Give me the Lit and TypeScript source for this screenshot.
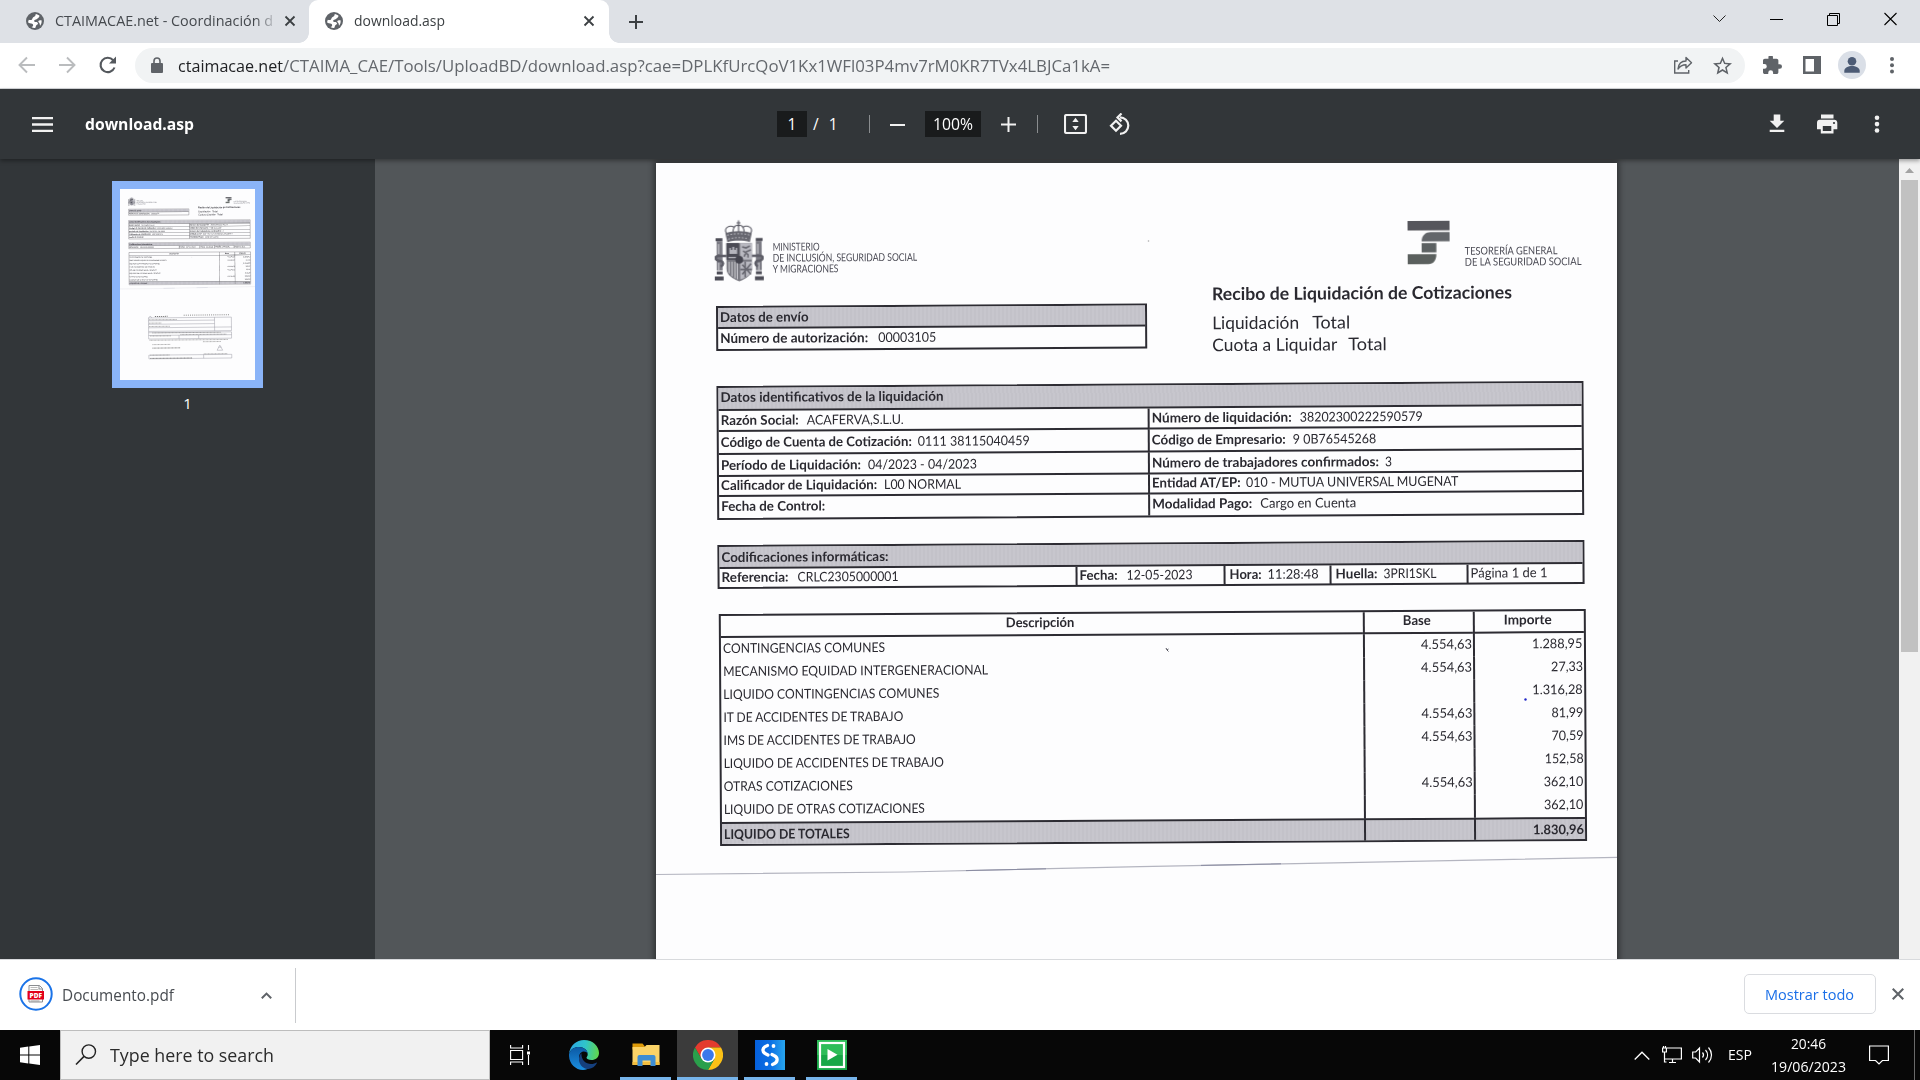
import { LitElement, html, css, svg, nothing } from "lit";

const measure = document.createElement("canvas").getContext("2d")!;

/** One line of text condensed or stretched to a given advance width. */
class FitText extends LitElement {
  static properties = { text: {}, w: { type: Number } };
  declare text: string;
  declare w: number;
  static styles = css`
    :host { display: inline-block; white-space: pre; flex: none; text-align: left; }
    .run { display: block; width: max-content; transform-origin: 0 50%; }
  `;
  render() {
    return html`<span class="run">${this.text}</span>`;
  }
  updated() {
    measure.font = getComputedStyle(this).font;
    const k = this.w / measure.measureText(this.text).width;
    this.style.width = this.w + "px";
    (this.renderRoot.querySelector(".run") as HTMLElement).style.transform = `scaleX(${k})`;
  }
}
customElements.define("fit-text", FitText);

const fit = (text: string, w: number, cls = "") => html`<fit-text class=${cls} .text=${text} .w=${w}></fit-text>`;
const pair = (l: string, lw: number, gap: number, v = "", vw = 0) =>
  html`${fit(l, lw, "b")}${v ? html`<span style="width:${gap}px" class="sp"></span>${fit(v, vw)}` : nothing}`;

const coat = html`<svg class="coat" viewBox="0 0 50 62">
  <g fill="none" stroke="#55555f" stroke-width="1.1">
    <path d="M24.5 0v6M22.5 2.5h4" />
    <path d="M12 13c-3-6 4-9 8-6 1-3 8-3 9 0 4-3 11 0 8 6M20 7c-2 3-1 8 0 10M29 7c2 3 1 8 0 10M24.500 5v12" />
  </g>
  <path fill="#66666f" d="M11 13c7-3 20-3 27 0l-2 9c-7-2-16-2-23 0z" />
  <path stroke="#c9c9cf" stroke-width="1" stroke-dasharray="1.500 2" fill="none" d="M13 15c7-2 16-2 23 0M14 19c7-2 14-2 21 0" />
  <path fill="#77777f" d="M12 23h26v26c0 7-6 10-13 13-7-3-13-6-13-13z" />
  <path fill="#4b4b55" d="M12 23h13v17H12z" />
  <path fill="#b9b9c1" d="M26 23h12v17H26zM26 42h12v7c0 5-5 9-12 11z" />
  <path fill="#b5b5bd" d="M15 34v-6h1.500v2h1.500v-3h2v3h1.500v-2H23v6zM14 37h9v1.500h-9z" />
  <path stroke="#66666f" stroke-width="1.600" fill="none" d="M28 27l4 1 4-2M30 37l2-5 5-2M29 31l5 4v3M28 45l9 10M37 44l-9 11M26 50h12M31 42v16" />
  <path stroke="#d5d5da" stroke-width="1" fill="none" d="M14.500 42v12M17.500 42v15M20.500 42v17M23 42v18" />
  <circle cx="25" cy="40" r="4" fill="#44444e" />
  <g fill="#7b7b84">
    <path d="M2 21h6v30H2zM42 21h6v30h-6z" />
  </g>
  <path stroke="#dcdce0" stroke-width="1" d="M4 24v10M44 24v10M4 43v8M45 43v8" />
  <g fill="#4d4d57">
    <path d="M1 18h7v3H1zM42 18h7v3h-7zM2 52h6v3H2zM42 52h6v3h-6zM0 57h9v4H0zM41 57h9v4h-9z" />
  </g>
  <path fill="none" stroke="#5d5d67" stroke-width="2.500" d="M12 36H4c-4 0-4 4 0 5 5 0 6 4 2 6M38 36h8c4 0 4 4 0 5-5 0-6 4-2 6" />
</svg>`;

const tgss = html`<svg class="tgss" viewBox="0 0 42 44">
  <path fill="#56565c" d="M0 0h42v9.500H0z" />
  <path fill="#63666a" d="M14 20.500c0-6 4-9.300 9-9.300h19v9.300z" />
  <path fill="#5c6162" d="M14 22.200h14.700v9.300H14z" />
  <path fill="#5b605e" d="M0 33.300h28.700c0 6-3 10-8 10H0z" />
</svg>`;

const dashes = [
  [250, 905, 90, 4, 7], [455, 898, 330, 3, 8], [208, 928, 200, 2, 3], [208, 952, 90, 2, 3], [208, 976, 150, 2, 3], [230, 1022, 490, 2, 3],
  [215, 1044, 150, 2, 3], [430, 1036, 330, 2, 3], [210, 1074, 560, 2, 3], [590, 1088, 130, 2, 3], [230, 1105, 130, 2, 3],
  [230, 1130, 200, 3, 3], [214, 1180, 140, 2, 3], [214, 1203, 300, 3, 3], [595, 1175, 170, 2, 3],
];
const stub = html`<svg class="stub" viewBox="0 0 961 1360">
  <g fill="none" stroke="#8b8b95" stroke-width="3" transform="rotate(-.6 480 1050)">
    <path d="M204 915h590v96H204zM204 935h470M204 960h470M204 985h590M674 915v96M204 1011v54h590v-45H204M204 1040h590M420 1040v25M560 1040v25M204 1180h590v26H204zM594 1180v26" />
    ${dashes.map((d) => svg`<path stroke="#666" stroke-width=${d[3] * 1.8} stroke-dasharray="7 ${d[4]}" d="M${d[0]} ${d[1]}h${d[2]}" />`)}
    <path d="M205 915l12-14 10 14M690 1150l20-36 20 36zM700 1128h22" />
  </g>
</svg>`;

type Row = [string, number, string, number, string, number];
const rows: Row[] = [
  ["CONTINGENCIAS COMUNES", 162, "4.554,63", 51, "1.288,95", 50.5],
  ["MECANISMO EQUIDAD INTERGENERACIONAL", 265, "4.554,63", 51, "27,33", 32],
  ["LIQUIDO CONTINGENCIAS COMUNES", 216, "", 0, "1.316,28", 50.5],
  ["IT DE ACCIDENTES DE TRABAJO", 181, "4.554,63", 51, "81,99", 32],
  ["IMS DE ACCIDENTES DE TRABAJO", 193, "4.554,63", 51, "70,59", 32],
  ["LIQUIDO DE ACCIDENTES DE TRABAJO", 221, "", 0, "152,58", 39],
  ["OTRAS COTIZACIONES", 129, "4.554,63", 51, "362,10", 39.5],
  ["LIQUIDO DE OTRAS COTIZACIONES", 201, "", 0, "362,10", 39.5],
];

class ReceiptPage extends LitElement {
  static styles = css`
    :host { display: block; position: relative; width: 961px; height: 1360px; background: #fdfdfe; overflow: hidden; color: #2a2930; font: 13.4px/16px Lato, "Liberation Sans", sans-serif; }
    .scan { padding: 56px 34px 0 60px; transform: rotate(-0.33deg); transform-origin: 61px 144px; }
    .b { font-weight: 700; }
    .sp { flex: none; }
    .top { display: flex; height: 167px; }
    .left { width: 431px; display: flex; flex-direction: column; }
    .ministry { display: flex; height: 86px; align-items: flex-start; padding-top: 0.5px; }
    .coat { width: 49px; height: 62px; margin-left: -1.5px; filter: blur(0.4px); flex: none; }
    .inst { display: flex; flex-direction: column; font-size: 10.8px; line-height: 11px; color: #4a4a54; margin: 21.5px 0 0 9.5px; }
    .right { margin-left: 64.5px; flex: 1; display: flex; flex-direction: column; padding-top: 6px; }
    .office { display: flex; margin-left: 196px; height: 60.5px; }
    .tgss { width: 42px; height: 44px; filter: blur(0.3px); flex: none; }
    .office .inst { margin: 23.5px 0 0 15.5px; }
    .title { font-size: 17.6px; line-height: 22px; }
    .line { display: flex; font-size: 17.6px; line-height: 22px; }
    .line.first { margin-top: 7.5px; }
    .box { border: 2px solid #2d2c33; box-sizing: border-box; }
    .shade { background: repeating-linear-gradient(90deg, #c3c2c9 0 2px, #c7c6cd 2px 4px); }
    .cell { display: flex; align-items: center; padding: 0 0 2px 2px; box-sizing: border-box; }
    .envio { height: 45.5px; display: grid; grid-template-rows: 21.5px 1fr; }
    .envio .shade, .ident .shade, .codif .shade { border-bottom: 2px solid #2d2c33; }
    .envio .shade { padding-bottom: 0; }
    .ident { width: 867px; height: 133.5px; display: grid; grid-template-columns: 430.5px 1fr; grid-template-rows: 23.4px 21px 23px 21.6px 20px 1fr; }
    .ident .shade, .codif .shade { grid-column: 1 / -1; }
    .ident .shade { padding-bottom: 3.5px; }
    .ident .cell:not(.shade) { border-bottom: 2px solid #2d2c33; padding-bottom: 1px; }
    .ident .cell:not(.shade):nth-last-child(-n + 2) { border-bottom: 0; padding-bottom: 3px; }
    .ident .cell:nth-child(2n) { border-right: 2px solid #2d2c33; }
    .ident .cell:nth-child(2n + 3) { padding-left: 2.5px; }
    .codif { width: 867px; height: 44.5px; margin-top: 25px; display: grid; grid-template-columns: 358px 148px 106px 137px 1fr; grid-template-rows: 22.5px 1fr; }
    .codif .cell:not(.shade) { padding-bottom: 2.5px; }
    .codif .shade { padding-bottom: 0.5px; }
    .codif .cell + .cell + .cell { border-left: 2px solid #2d2c33; margin-left: -2px; }
    .codif .wide { padding-left: 4px; }
    .lines { width: 867px; height: 232.5px; margin: 24.5px 0 0 0.5px; display: grid; grid-template-columns: 642px 110.5px 1fr; grid-template-rows: 22px repeat(8, 23.1px) 1fr; }
    .lines .cell { padding-bottom: 3px; }
    .lines .cell:nth-child(3n + 2), .lines .cell:nth-child(3n) { border-left: 2px solid #2d2c33; justify-content: flex-end; padding-right: 1px; }
    .lines .head { border-bottom: 2px solid #2d2c33; justify-content: center !important; padding-right: 5px !important; padding-bottom: 2.5px; }
    .lines .shade { border-top: 2px solid #2d2c33; padding-bottom: 0.5px; }
    .stub { position: absolute; inset: 0; width: 961px; height: 1360px; }
    .marks { position: absolute; inset: 0; width: 961px; height: 800px; }
  `;
  render() {
    return html`
      <div class="scan">
        <div class="top">
          <div class="left">
            <div class="ministry">
              ${coat}
              <div class="inst">
                ${fit("MINISTERIO", 47)}${fit("DE INCLUSIÓN, SEGURIDAD SOCIAL", 144.5)}${fit("Y MIGRACIONES", 66)}
              </div>
            </div>
            <div class="box envio">
              <div class="cell shade">${fit("Datos de envío", 88.500, "b")}</div>
              <div class="cell">${pair("Número de autorización:", 148, 10, "00003105", 58)}</div>
            </div>
          </div>
          <div class="right">
            <div class="office">
              ${tgss}
              <div class="inst">${fit("TESORERÍA GENERAL", 93)}${fit("DE LA SEGURIDAD SOCIAL", 117)}</div>
            </div>
            <div class="title">${fit("Recibo de Liquidación de Cotizaciones", 300, "b")}</div>
            <div class="line first">${fit("Liquidación", 87)}<span class="sp" style="width:13px"></span>${fit("Total", 38)}</div>
            <div class="line">${fit("Cuota a Liquidar", 125)}<span class="sp" style="width:11px"></span>${fit("Total", 38.500)}</div>
          </div>
        </div>
        <div class="box ident">
          <div class="cell shade">${fit("Datos identificativos de la liquidación", 223, "b")}</div>
          <div class="cell">${pair("Razón Social:", 78, 8, "ACAFERVA,S.L.U.", 97)}</div>
          <div class="cell">${pair("Número de liquidación:", 140, 7.5, "38202300222590579", 123)}</div>
          <div class="cell">${pair("Código de Cuenta de Cotización:", 191, 6, "0111 38115040459", 112)}</div>
          <div class="cell">${pair("Código de Empresario:", 134, 7, "9 0B76545268", 83.5)}</div>
          <div class="cell">${pair("Período de Liquidación:", 140, 7, "04/2023 - 04/2023", 109)}</div>
          <div class="cell">${pair("Número de trabajadores confirmados:", 227, 6, "3", 7)}</div>
          <div class="cell">${pair("Calificador de Liquidación:", 156.5, 6.5, "L00 NORMAL", 77)}</div>
          <div class="cell">${pair("Entidad AT/EP:", 89, 5, "010 - MUTUA UNIVERSAL MUGENAT", 213)}</div>
          <div class="cell">${pair("Fecha de Control:", 104, 0)}</div>
          <div class="cell">${pair("Modalidad Pago:", 100, 8, "Cargo en Cuenta", 96)}</div>
        </div>
        <div class="box codif">
          <div class="cell shade">${fit("Codificaciones informáticas:", 167, "b")}</div>
          <div class="cell">${pair("Referencia:", 67, 9, "CRLC2305000001", 101)}</div>
          <div class="cell">${pair("Fecha:", 38, 9, "12-05-2023", 66)}</div>
          <div class="cell wide">${pair("Hora:", 32, 6, "11:28:48", 51)}</div>
          <div class="cell wide">${pair("Huella:", 42, 6, "3PRI1SKL", 53)}</div>
          <div class="cell">${fit("Página 1 de 1", 77)}</div>
        </div>
        <div class="box lines">
          <div class="cell head">${fit("Descripción", 68.5, "b")}</div>
          <div class="cell head">${fit("Base", 28, "b")}</div>
          <div class="cell head">${fit("Importe", 48, "b")}</div>
          ${rows.map(
            (r) => html`<div class="cell">${fit(r[0], r[1])}</div>
              <div class="cell">${r[2] ? fit(r[2], r[3]) : nothing}</div>
              <div class="cell">${fit(r[4], r[5])}</div>`
          )}
          <div class="cell shade">${fit("LIQUIDO DE TOTALES", 126, "b")}</div>
          <div class="cell shade"></div>
          <div class="cell shade">${fit("1.830,96", 51, "b")}</div>
        </div>
      </div>
      <svg class="marks" viewBox="0 0 961 800" fill="none">
        <path stroke="#b4b5c0" stroke-width="1.200" d="M0 711.500L250 709L484 703.600L961 694.300" />
        <path stroke="#8a8ca2" stroke-width="1" d="M310 707.600l80-1.800M545 702.400l80-1.600" />
        <path stroke="#55555f" d="M510 485l1 2 1.500-1M511 487l1.500 1.500" />
        <circle cx="869.500" cy="536.500" r="1.200" fill="#2228c8" />
        <circle cx="492.500" cy="78" r=".8" fill="#aaa" />
      </svg>
      ${stub}
    `;
  }
}
customElements.define("receipt-page", ReceiptPage);

const globe = html`<svg class="i18" viewBox="0 0 24 24"><circle cx="12" cy="12" r="12" fill="#5f6368" />
  <path fill="#fff" d="M13 2.800c1.800.2 4 1.200 5.300 2.600-1 .9-1.200 2.400-2.300 2.800-1.200.3-1.500 1.500-2.700 1.800-1.500.2-2.400.8-2.500 2 .1 1.200 1.200 1.200 2.400 1.200 1.600 0 2.800.9 2.800 2.200 0 1.300-1.200 1.700-2.200 2.200-.6.800-.5 2-1.500 3.600-1.800.2-3.500-.2-5-1.200 1.300-.2 2.200-1 2.200-2.400 0-1.500-1-2.200-2.500-2.300-1.300 0-2.700-.7-4.200-1.300.1-1.500.4-2.600 1-3.800 1.500.7 3.200.7 4.200-.3.800-.9.600-2.200 1.700-2.900 1.300-.8 3.300-1.300 3.300-4.200zM20.700 11c.5 2.800-.2 5.500-2 7.300-.3-1-.2-2.400-.9-3.500-.7-1.200-1.800-1.800-1.300-2.800.7-1.200 2.700-1.300 4.200-1z" /></svg>`;
const cross = (c: string) => html`<svg class=${c} viewBox="0 0 12 12"><path d="M1.500 1.500l9 9M10.500 1.500l-9 9" fill="none" stroke="currentColor" stroke-width="1.800" /></svg>`;

class AppRoot extends LitElement {
  static styles = css`
    :host { display: flex; flex-direction: column; width: 1920px; height: 1080px; overflow: hidden; background: #fff; font: 14.4px/20px "Open Sans", "Noto Sans", sans-serif; color: #3c4043; }
    * { box-sizing: border-box; }
    svg { display: block; flex: none; }
    .i18 { width: 18px; height: 18px; }
    .tabs { height: 43px; background: #dee1e6; display: flex; align-items: center; flex: none; }
    .tab { height: 43px; display: flex; align-items: center; padding-bottom: 2px; }
    .tab.idle { width: 309px; padding-left: 26px; color: #45494e; }
    .tab .label { margin-left: 11px; width: 219px; display: flex; }
    .idle .label { -webkit-mask-image: linear-gradient(90deg, #000 200px, transparent 224px); }
    .tab.active { width: 300px; background: #fff; border-radius: 9px 9px 0 0; padding-left: 16px; position: relative; }
    .tab.active::before, .tab.active::after { content: ""; position: absolute; bottom: 0; width: 10px; height: 10px; }
    .tab.active::before { left: -10px; background: radial-gradient(circle at 0 0, transparent 9.5px, #fff 10px); }
    .tab.active::after { right: -10px; background: radial-gradient(circle at 100% 0, transparent 9.500px, #fff 10px); }
    .active .label { width: 220px; }
    .tx { width: 12px; height: 12px; color: #3c4043; margin-left: 10px; }
    .active .tx { margin-left: 9px; margin-right: 0; }
    .plus { width: 16px; height: 16px; margin-left: 19px; }
    .win { margin-left: auto; display: flex; align-items: center; height: 37px; align-self: flex-start; padding-right: 1px; }
    .win svg { width: 57px; height: 20px; }
    .bar { height: 46px; display: flex; align-items: center; border-bottom: 1px solid #d5d7da; padding-bottom: 1px; flex: none; }
    .nav { width: 20px; height: 20px; }
    .nav.n1 { margin-left: 17px; } .nav.n2 { margin-left: 20px; } .nav.n3 { margin-left: 21px; }
    .omni { margin-left: 17px; width: 1610px; height: 35px; border-radius: 18px; background: #f1f3f4; display: flex; align-items: center; padding-left: 16px; font-size: 16.5px; line-height: 24px; color: #64686d; }
    .omni fit-text { margin-top: 2px; }
    .omni .lock { width: 12px; height: 16px; margin-right: 15px; }
    .host { color: #202124; }
    .omni .share { width: 20px; height: 20px; margin-left: auto; margin-right: 20px; }
    .omni .star { width: 19px; height: 19px; margin-right: 13px; }
    .ext { width: 19px; height: 19px; margin-left: 18px; }
    .side { width: 18px; height: 18px; margin-left: 21px; }
    .ava { width: 28px; height: 28px; margin-left: 17px; }
    .kebab { width: 6px; height: 18px; margin-left: 23px; }
    .pdfbar { height: 70px; background: #323639; color: #fff; display: grid; grid-template-columns: 777px 1fr auto; align-items: center; box-shadow: 0 2px 4px rgba(0, 0, 0, 0.35); position: relative; flex: none; }
    .pl, .pc, .pr { display: flex; align-items: center; }
    .burger { width: 21px; height: 15px; margin-left: 32px; }
    .name { margin-left: 32px; font-weight: 700; font-size: 15.5px; }
    .field { background: #191b1c; height: 26px; display: flex; align-items: center; justify-content: center; font-size: 15.500px; }
    .f1 { width: 30px; } .f2 { width: 56px; margin-left: 20px; }
    .of { font-size: 15.5px; width: 54px; padding-left: 6px; display: flex; gap: 10px; }
    .sep { width: 1px; height: 18px; background: #8a8d8f; margin-left: 8px; }
    .pm { width: 15px; height: 15px; }
    .pm.minus { margin-left: 20px; } .pm.add { margin-left: 20px; } .sep.two { margin-left: 21px; }
    .fitp { width: 23px; height: 20px; margin-left: 26px; }
    .rot { width: 23px; height: 23px; margin-left: 22px; }
    .pr svg { width: 22px; height: 22px; margin-right: 28px; }
    .pr svg:last-child { margin-right: 32px; }
    .view { height: 800px; flex: none; display: flex; background: #525659; overflow: hidden; }
    .thumbs { width: 375px; background: #323639; display: flex; flex-direction: column; align-items: center; padding-top: 22px; color: #fff; font: 15px/18px "Open Sans", "Noto Sans", sans-serif; }
    .thumb { width: 151px; height: 207px; border: 8px solid #8ab4f8; overflow: hidden; background: #fdfdfe; }
    .mini { width: 961px; transform: scale(0.1405); transform-origin: 0 0; }
    .num { margin-top: 6px; }
    .stage { flex: 1; padding: 4px 0 0 281px; overflow: hidden; }
    .sheet { width: 961px; box-shadow: 0 0 6px 2px rgba(0, 0, 0, 0.45); }
    .scroll { width: 21px; background: #f1f1f1; display: flex; flex-direction: column; align-items: center; }
    .scroll svg { width: 9px; height: 5px; margin-top: 9px; }
    .grip { width: 17px; height: 472px; background: #c1c1c1; margin-top: 7px; }
    .dl { height: 71px; border-top: 1px solid #d8dadd; display: flex; align-items: center; flex: none; background: #fff; padding-bottom: 2px; }
    .pdf { width: 34px; height: 34px; margin-left: 18.500px; }
    .file { font-size: 15.5px; margin: 2px 0 0 9px; color: #484c51; }
    .up { width: 11px; height: 7px; margin: 2px 0 0 87.5px; }
    .vr { width: 1px; height: 55px; background: #c9cbce; margin: 3px 0 0 22.500px; }
    .all { margin-left: auto; width: 132px; height: 40px; border: 1px solid #dadce0; border-radius: 5px; display: flex; align-items: center; justify-content: center; padding-right: 2px; color: #1a6fe8; font-size: 14.600px; }
    .cx { width: 14px; height: 14px; color: #5f6368; margin: 0 15px 0 15px; }
    .task { height: 50px; background: #070707; display: flex; align-items: center; flex: none; color: #fff; }
    .start { width: 60px; padding-left: 20px; }
    .start svg { width: 20px; height: 20px; }
    .search { width: 430px; height: 50px; border: 1px solid #bdbdbd; background: #f1f1f1; color: #2b2b2b; display: flex; align-items: center; padding-left: 14px; font-size: 18px; line-height: 24px; }
    .search svg { width: 22px; height: 22px; margin-right: 13px; }
    .app { width: 51px; height: 50px; display: flex; align-items: center; justify-content: center; margin-left: 11px; }
    .app svg { width: 30px; height: 30px; }
    .app.run { border-bottom: 3px solid #76b4ea; padding-top: 3px; }
    .app.tv { margin-left: 4px; } .app.tv svg { width: 20px; height: 20px; }
    .app.edge { margin-left: 13px; } 
    .app.cur { width: 61px; background: #3b3b3b; margin-left: 6px; }
    .app.s { margin-left: 6px; }
    .tray { margin-left: auto; display: flex; align-items: center; font-size: 14px; }
    .chev { width: 16px; height: 9px; margin-right: 12px; }
    .net { width: 20px; height: 18px; margin-right: 10px; }
    .vol { width: 21px; height: 18px; margin-right: 15px; }
    .clock { display: flex; flex-direction: column; align-items: center; line-height: 23px; margin-left: 19px; width: 75px; }
    .note { width: 20px; height: 20px; margin-left: 23px; }
    .desk { width: 1px; height: 50px; background: #6a6a6a; margin: 0 5px 0 25px; }
  `;

  render() {
    return html`
      <div class="tabs">
        <div class="tab idle">${globe}<div class="label">${fit("CTAIMACAE.net - Coordinación d", 218)}</div>${cross("tx")}</div>
        <div class="tab active">${globe}<div class="label">${fit("download.asp", 91)}</div>${cross("tx")}</div>
        <svg class="plus" viewBox="0 0 16 16"><path d="M8 1v14M1 8h14" stroke="#3c4043" stroke-width="2" /></svg>
        <div class="win">
          <svg viewBox="0 0 57 20"><path d="M22.500 6.500l6 6 6-6" fill="none" stroke="#222" /></svg>
          <svg viewBox="0 0 57 20"><path d="M22 10.500h13" stroke="#000" /></svg>
          <svg viewBox="0 0 57 20"><path d="M22.500 6.500h10v10h-10zM24.500 6.500v-2h10v10h-2" fill="none" stroke="#000" /></svg>
          <svg viewBox="0 0 57 20"><path d="M22.500 4l12 12M34.500 4l-12 12" fill="none" stroke="#000" stroke-width="1.100" /></svg>
        </div>
      </div>
      <div class="bar">
        <svg class="nav n1" viewBox="0 0 20 20"><path d="M18 10H3M10 2.500L2.500 10l7.500 7.500" fill="none" stroke="#babcbe" stroke-width="1.900" /></svg>
        <svg class="nav n2" viewBox="0 0 20 20"><path d="M2 10h15M10 2.500l7.500 7.500-7.500 7.500" fill="none" stroke="#babcbe" stroke-width="1.900" /></svg>
        <svg class="nav n3" viewBox="0 0 20 20"><path d="M16.500 12.500a7.200 7.200 0 1 1-1.300-7.300" fill="none" stroke="#54585d" stroke-width="2.100" /><path d="M18 1.500V8.500H11z" fill="#54585d" /></svg>
        <div class="omni">
          <svg class="lock" viewBox="0 0 12 16"><path d="M1 6h10a1 1 0 0 1 1 1v8a1 1 0 0 1-1 1H1a1 1 0 0 1-1-1V7a1 1 0 0 1 1-1z" fill="#5f6368" /><path d="M3 7V4a3 3 0 0 1 6 0v3" fill="none" stroke="#5f6368" stroke-width="1.600" /></svg>
          ${fit("ctaimacae.net", 105, "host")}${fit("/CTAIMA_CAE/Tools/UploadBD/download.asp?cae=DPLKfUrcQoV1Kx1WFl03P4mv7rM0KR7TVx4LBJCa1kA=", 827)}
          <svg class="share" viewBox="0 0 20 20" fill="none" stroke="#5f6368" stroke-width="1.400"><path d="M5 6H1.700v12h14v-3" /><path d="M5 14c.5-5 3-8 8-8V2.500l5.500 5.300L13 13V9.800c-4 0-6 1.200-8 4.200z" stroke-linejoin="round" /></svg>
          <svg class="star" viewBox="0 0 24 24"><path fill="#5f6368" d="M24 9.200l-8.600-.7L12 .5 8.600 8.500 0 9.200l6.500 5.700L4.600 23.300 12 18.800l7.400 4.500-2-8.400zM12 16.500l-4.500 2.700 1.200-5.100-4-3.500 5.300-.4L12 5.300l2.100 4.900 5.200.4-4 3.500 1.200 5.100z" /></svg>
        </div>
        <svg class="ext" viewBox="2 2 21 21"><path fill="#5f6368" d="M20.500 11H19V7c0-1.100-.9-2-2-2h-4V3.500a2.500 2.500 0 0 0-5 0V5H4c-1.100 0-2 .9-2 2v3.800h1.500a2.700 2.700 0 0 1 0 5.400H2V20c0 1.100.9 2 2 2h3.800v-1.500a2.700 2.700 0 0 1 5.400 0V22H17c1.100 0 2-.9 2-2v-4h1.500a2.500 2.500 0 0 0 0-5z" /></svg>
        <svg class="side" viewBox="0 0 18 18"><path fill="#5f6368" fill-rule="evenodd" d="M0 0h18v18H0zM2.500 3v12.500H11V3z" /></svg>
        <svg class="ava" viewBox="0 0 28 28"><circle cx="14" cy="14" r="14" fill="#dadfe7" /><circle cx="14" cy="10.300" r="4.300" fill="#4c5b75" /><path fill="#4c5b75" d="M6.300 21.700v-2c0-3 4-4.700 7.700-4.700s7.700 1.700 7.700 4.700v2z" /></svg>
        <svg class="kebab" viewBox="0 0 6 18" fill="#5f6368"><circle cx="3" cy="3" r="2" /><circle cx="3" cy="9.200" r="2" /><circle cx="3" cy="15.500" r="2" /></svg>
      </div>
      <div class="pdfbar">
        <div class="pl">
          <svg class="burger" viewBox="0 0 21 15"><path d="M0 1.200h21M0 7.500h21M0 13.800h21" stroke="#f1f1f1" stroke-width="2.300" /></svg>
          ${fit("download.asp", 109, "name")}
        </div>
        <div class="pc">
          <div class="field f1">1</div>
          <div class="of"><span>/</span><span>1</span></div>
          <div class="sep"></div>
          <svg class="pm minus" viewBox="0 0 15 15"><path d="M0 8h15" stroke="#f1f1f1" stroke-width="2" /></svg>
          <div class="field f2">${fit("100%", 40)}</div>
          <svg class="pm add" viewBox="0 0 15 15"><path d="M0 7.500h15M7.500 0v15" stroke="#f1f1f1" stroke-width="2" /></svg>
          <div class="sep two"></div>
          <svg class="fitp" viewBox="0 0 23 20"><rect x="1" y="1" width="21" height="18" rx="1.500" fill="none" stroke="#f1f1f1" stroke-width="2.100" /><path fill="#f1f1f1" d="M11.500 3.700l3.200 4.200H8.300zM11.500 16.300l3.200-4.200H8.300z" /></svg>
          <svg class="rot" viewBox="0 0 23 23"><path d="M11 4.300a8.300 8.300 0 1 1 0 16.600" fill="none" stroke="#f1f1f1" stroke-width="2.200" /><path d="M12.500.5L8.500 4.400l4 4" fill="none" stroke="#f1f1f1" stroke-width="2.200" /><path d="M7 7.700l5 5-5 5-5-5z" fill="none" stroke="#f1f1f1" stroke-width="2.200" /></svg>
        </div>
        <div class="pr">
          <svg viewBox="0 0 22 22" fill="#f1f1f1"><path d="M7.700 1.500h6.600v6.300h4L11 15 3.700 7.800h4zM3.700 16.800h14.600v2.300H3.700z" /></svg>
          <svg viewBox="0 0 22 22"><path fill="#f1f1f1" d="M5 1.500h12.500v4H5zM3.700 6.800h14.600c1.700 0 3 1.300 3 3v6.400h-3.800v4.300H4.800v-4.300H1V9.800c0-1.700 1-3 2.700-3z" /><path fill="#323639" d="M6.800 13h8.500v5H6.800z" /><circle cx="18" cy="10" r="1.100" fill="#323639" /></svg>
          <svg viewBox="0 0 22 22" fill="#f1f1f1"><circle cx="11" cy="4.800" r="2.300" /><circle cx="11" cy="11.100" r="2.300" /><circle cx="11" cy="17.500" r="2.300" /></svg>
        </div>
      </div>
      <div class="view">
        <div class="thumbs">
          <div class="thumb"><div class="mini"><receipt-page></receipt-page></div></div>
          <div class="num">1</div>
        </div>
        <div class="stage"><receipt-page class="sheet"></receipt-page></div>
        <div class="scroll"><svg viewBox="0 0 9 5"><path d="M0 5L4.500 0 9 5z" fill="#a3a3a3" /></svg><div class="grip"></div></div>
      </div>
      <div class="dl">
        <svg class="pdf" viewBox="0 0 34 34"><circle cx="17" cy="17" r="15.700" fill="#fff" stroke="#1a73e8" stroke-width="2" /><path d="M10 8.500h10.500l3 3V25H10z" fill="#fff" stroke="#8a8d91" /><path d="M11.500 10.500h7M11.500 12.500h8" stroke="#aaa" stroke-width=".8" /><path d="M20 8.500v3.500h3.500" fill="none" stroke="#8a8d91" /><path d="M8.500 14h16.500v8.500H8.500z" fill="#e2001a" /><path d="M11.500 24h9" stroke="#999" /><text x="16.800" y="20.600" text-anchor="middle" font-family="Open Sans, sans-serif" font-weight="800" font-size="6.500" fill="#fff">PDF</text></svg>
        ${fit("Documento.pdf", 112, "file")}
        <svg class="up" viewBox="0 0 11 7"><path d="M.8 6.300l4.700-4.700 4.700 4.700" fill="none" stroke="#5f6368" stroke-width="2" /></svg>
        <div class="vr"></div>
        <div class="all">${fit("Mostrar todo", 89)}</div>
        ${cross("cx")}
      </div>
      <div class="task">
        <div class="start"><svg viewBox="0 0 20 20" fill="#fff"><path d="M0 2.700L8.300 1.500v8H0zM9.300 1.400L20 0v9.500H9.300zM0 10.500h8.300v8L0 17.300zM9.300 10.500H20V20L9.300 18.600z" /></svg></div>
        <div class="search"><svg viewBox="0 0 22 22"><circle cx="13.800" cy="7.600" r="6.700" fill="none" stroke="#222" stroke-width="1.400" /><path d="M9 12.400L1 20.500" stroke="#222" stroke-width="1.500" /></svg>${fit("Type here to search", 164)}</div>
        <div class="app tv"><svg viewBox="0 0 20 20" fill="none" stroke="#fff" stroke-width="1.100"><path d="M.6 0v3h12V0M.6 5.500h12v9H.6zM.6 20v-3h12v3M18.500 0v5M18.500 10v10" /><path d="M17 6.500h3v3h-3z" fill="#fff" stroke="none" /></svg></div>
        <div class="app edge"><svg viewBox="0 0 30 30">
          <defs>
            <linearGradient id="e1" x1="0" y1=".2" x2="1" y2=".3"><stop offset="0" stop-color="#2aa5e8" /><stop offset=".55" stop-color="#30c5c9" /><stop offset="1" stop-color="#5fd550" /></linearGradient>
            <linearGradient id="e2" x1="0" y1="0" x2="0" y2="1"><stop offset="0" stop-color="#0c59a4" /><stop offset="1" stop-color="#1b8fe0" /></linearGradient>
          </defs>
          <path fill="url(#e1)" d="M0 14C1 5.500 7.500 0 15 0c9 0 15 6.300 15 13 0 4.500-3.500 7-7.500 7-3 0-5-1-5-2.200 0-.9 1.200-1.300 1.200-3.600C18.700 10 14.500 7 10 7 5 7 1.500 9.500 0 14z" />
          <path fill="url(#e2)" d="M0 14c1.500-4.500 5-7 10-7 4.500 0 8.500 3 8.700 6.500C18 12.300 16.500 11.500 15 11.500c-3 0-5.200 2.800-5 6.500.3 6 5.500 10.500 11 9.500-2 1.500-4 2.500-7 2.500C6 29.700-.5 23 0 14z" />
          <path fill="#153f7c" d="M10 18c.3-2 1-3.600 2.500-4.800C12 20 17 24 22 24c2.500 0 4-.8 5-1.300.6-.3 1 .2.700.7-1.700 2.800-4.400 5-8 5.600C14 29.500 9.500 24 10 18z" /></svg></div>
        <div class="app run"><svg viewBox="0 0 30 30"><path fill="#dd9a08" d="M1.500 3.500h10l2.500 3v3H1.500z" /><path fill="#fbd367" d="M1.500 7h12l2-2h13v20h-27z" /><path fill="#f2bd3e" d="M1.500 22h27v3h-27z" /><path fill="#3e8dd3" d="M6.500 17a2 2 0 0 1 2-2h14a2 2 0 0 1 2 2v9h-5v-5.500h-8V26h-5z" /></svg></div>
        <div class="app run cur"><svg viewBox="0 0 30 30"><path fill="#e33b2e" d="M2 7.500A15 15 0 0 1 28 7.500H15L8.500 18.800z" /><path fill="#fbc116" d="M28 7.500A15 15 0 0 1 15 30l6.500-11.300L15 7.500z" /><path fill="#2a9f4b" d="M15 30A15 15 0 0 1 2 7.500l6.500 11.300L15 22.500l6.500-3.800z" /><circle cx="15" cy="15" r="7.500" fill="#fff" /><circle cx="15" cy="15" r="5.900" fill="#3a78ea" /></svg></div>
        <div class="app run s"><svg viewBox="0 0 30 30"><defs><linearGradient id="g1"><stop offset="0" stop-color="#0560dc" /><stop offset=".5" stop-color="#0a6fe4" /><stop offset="1" stop-color="#28a6ee" /></linearGradient></defs><path fill="url(#g1)" d="M0 0h30v30H0z" /><path d="M12.500 5.500C6.500 7.500 6.800 12 11 14l2 1M17.500 24.500c6-2 5.800-7 1.500-9l-2-1" fill="none" stroke="#fff" stroke-width="3.200" stroke-linecap="round" /><circle cx="18.500" cy="6" r="1.900" fill="#fff" /><circle cx="11.500" cy="24" r="1.900" fill="#fff" /></svg></div>
        <div class="app run"><svg viewBox="0 0 30 30"><path fill="#2ebd59" d="M0 0h30v30H0z" /><path fill="#17a747" d="M0 15h30v15H0z" /><rect x="3" y="3" width="24" height="24" fill="none" stroke="#fff" stroke-width="2.200" /><path fill="#fff" d="M10.500 9l10 5.700-10 5.800z" /></svg></div>
        <div class="tray">
          <svg class="chev" viewBox="0 0 16 9"><path d="M.7 8.500L8 1.200l7.300 7.300" fill="none" stroke="#fff" stroke-width="1.300" /></svg>
          <svg class="net" viewBox="0 0 20 18" fill="none" stroke="#fff" stroke-width="1.200"><path d="M5 2h14.400v11H3M7 16.500h7M10.500 13v3.500M2.500 6.500V16h2M.6 2h3.800v4H.6zM1.500 0v2M3.500 0v2" /></svg>
          <svg class="vol" viewBox="0 0 21 18" fill="none" stroke="#fff" stroke-width="1.200"><path d="M.7 6h3L7.500 2v14L3.700 12h-3zM10.500 6.500c1.300 1.500 1.300 3.500 0 5M13.500 4c2.700 3 2.700 7 0 10M16.500 1.500c4 4.500 4 10.500 0 15" /></svg>
          ${fit("ESP", 24)}
          <div class="clock">${fit("20:46", 35)}${fit("19/06/2023", 75)}</div>
          <svg class="note" viewBox="0 0 20 20"><path d="M.6 1h18.800v14.500h-6L10 19l-3.400-3.500h-6z" fill="none" stroke="#fff" stroke-width="1.200" /></svg>
          <div class="desk"></div>
        </div>
      </div>
    `;
  }
}
customElements.define("app-root", AppRoot);
